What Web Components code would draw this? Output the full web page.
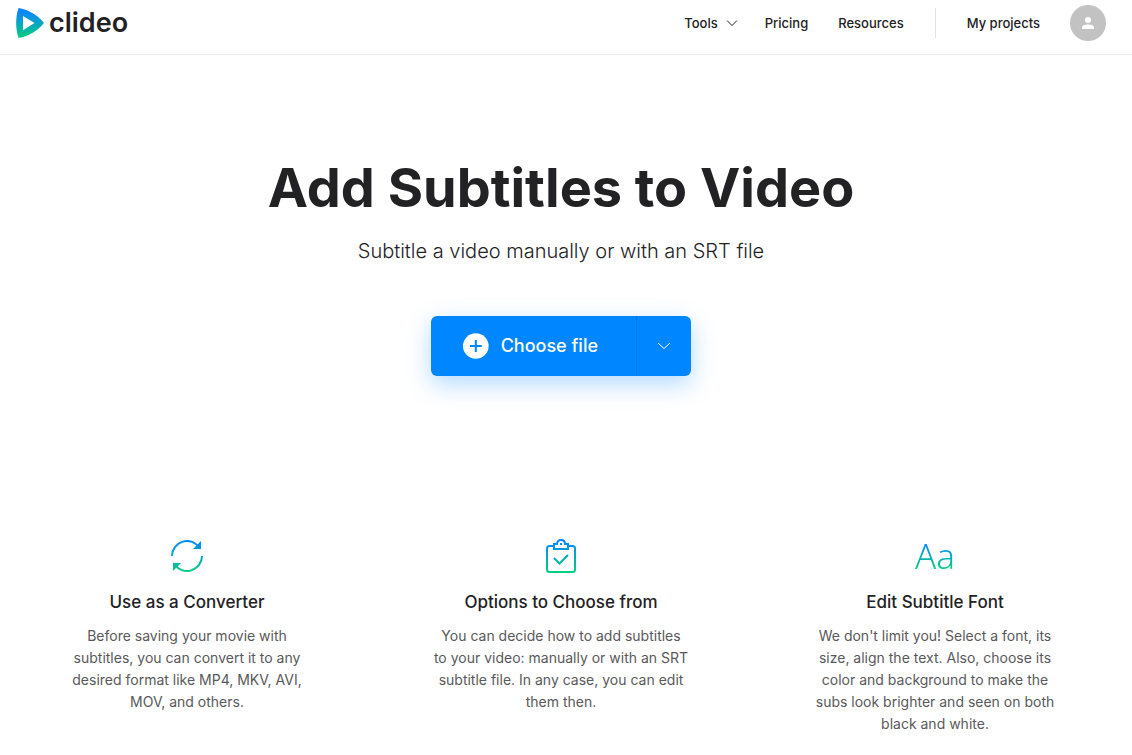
<!DOCTYPE html>
<html lang="en">
<head>
<meta charset="utf-8">
<meta name="viewport" content="width=device-width, initial-scale=1">
<title>Add Subtitles to Video - Clideo</title>
<style>
  body {
    margin: 0;
    background: #fff;
    color: #222224;
    font-family: Inter, "Liberation Sans", sans-serif;
  }
</style>
</head>
<body>
<clideo-page></clideo-page>

<script>
/**
 * Landing page components
 */

class ClideoLogo extends HTMLElement {
  constructor() {
    super();
    this.attachShadow({ mode: 'open' }).innerHTML = `
      <style>
        :host { display: block; }
        a {
          display: flex;
          align-items: center;
          gap: 5px;
          color: #222224;
          text-decoration: none;
          font: 600 27px/32px Inter, sans-serif;
        }
        svg { display: block; }
      </style>
      <a href="#">
        <svg width="28" height="32" viewBox="0 0 28 32" aria-hidden="true">
          <defs>
            <linearGradient id="g" x1="0" y1="0" x2="0" y2="1">
              <stop offset="0.1" stop-color="#0a85ff"/>
              <stop offset="1" stop-color="#05cd7c"/>
            </linearGradient>
          </defs>
          <path fill="url(#g)" fill-rule="evenodd" d="M2.500 1C12 2.600 21.300 7.500 28 16C21.300 24.500 12 29.400 2.500 31C-.600 21.500-.600 10.500 2.500 1ZM7 9V23.200L18.500 16Z"/>
        </svg>
        <span>clideo</span>
      </a>
    `;
  }
}

class ClideoHeader extends HTMLElement {
  constructor() {
    super();
    this.attachShadow({ mode: 'open' }).innerHTML = `
      <style>
        :host { display: block; }
        header {
          display: flex;
          align-items: center;
          justify-content: space-between;
          height: 46px;
          padding: 0 26px 8px 16px;
          border-bottom: 1px solid #ebebeb;
        }
        nav { display: flex; align-items: center; gap: 30px; }
        a, button {
          padding: 0;
          border: 0;
          background: none;
          color: inherit;
          font: 500 13px/20px Inter, sans-serif;
          text-decoration: none;
          cursor: pointer;
        }
        .tools { display: flex; align-items: center; gap: 8px; margin-right: -3px; }
        .line { width: 1px; height: 30px; margin: 0 1px; background: #e3e3e3; }
        .avatar {
          display: grid;
          place-items: center;
          width: 36px;
          height: 36px;
          border-radius: 50%;
          background: #c2c2c2;
        }
      </style>
      <header>
        <clideo-logo></clideo-logo>
        <nav>
          <button class="tools">Tools
            <svg width="12" height="8" viewBox="0 0 12 8" fill="none" stroke="#222224" aria-hidden="true"><path d="M1 1.500L6 6.500L11 1.500"/></svg>
          </button>
          <a href="#">Pricing</a>
          <a href="#">Resources</a>
          <span class="line"></span>
          <a href="#">My projects</a>
          <button class="avatar" aria-label="Account">
            <svg width="12" height="12" viewBox="0 0 12 12" fill="#fff" aria-hidden="true"><circle cx="6" cy="3" r="3"/><path d="M0 12V10.500C0 8.200 3 7.400 6 7.400S12 8.200 12 10.500V12Z"/></svg>
          </button>
        </nav>
      </header>
    `;
  }
}

class FilePicker extends HTMLElement {
  constructor() {
    super();
    this.attachShadow({ mode: 'open' }).innerHTML = `
      <style>
        :host {
          display: flex;
          height: 60px;
          border-radius: 6px;
          background: #0086ff;
          box-shadow: 0 8px 24px rgba(0, 134, 255, 0.3);
        }
        button {
          display: flex;
          align-items: center;
          justify-content: center;
          border: 0;
          background: none;
          color: #fff;
          font: 500 18px/24px Inter, sans-serif;
          cursor: pointer;
        }
        .choose { gap: 12px; width: 205px; padding: 0 38px 0 32px; justify-content: flex-start; white-space: nowrap; }
        .more { width: 55px; padding: 0; border-left: 1px solid #0077e2; }
      </style>
      <button class="choose">
        <svg width="26" height="26" viewBox="0 0 26 26" aria-hidden="true"><circle cx="13" cy="13" r="13" fill="#fff"/><path d="M13 7V19M7 13H19" stroke="#0086ff" stroke-width="2"/></svg>
        <slot></slot>
      </button>
      <button class="more" aria-label="More sources">
        <svg width="14" height="8" viewBox="0 0 14 8" fill="none" stroke="#fff" aria-hidden="true"><path d="M1 1L7 6.500L13 1"/></svg>
      </button>
    `;
  }
}

class FeatureCard extends HTMLElement {
  constructor() {
    super();
    this.attachShadow({ mode: 'open' }).innerHTML = `
      <style>
        :host { display: block; text-align: center; }
        .icon { display: flex; justify-content: center; height: 36px; }
        h2 { margin: 16px 0 11px; font: 500 17px/24px Inter, sans-serif; }
        p { max-width: 256px; margin: 0 auto; color: #59595b; font: 400 14px/22px Inter, sans-serif; }
      </style>
      <div class="icon"><slot name="icon"></slot></div>
      <h2><slot name="title"></slot></h2>
      <p><slot></slot></p>
    `;
  }
}

// Shared by the three feature icons, blue at the top and green at the bottom
const gradient = id => `
  <defs>
    <linearGradient id="${id}" gradientUnits="userSpaceOnUse" x1="0" y1="2" x2="0" y2="34">
      <stop offset="0" stop-color="#0086ff"/>
      <stop offset="1" stop-color="#00cf80"/>
    </linearGradient>
  </defs>`;

class ClideoPage extends HTMLElement {
  constructor() {
    super();
    this.attachShadow({ mode: 'open' }).innerHTML = `
      <style>
        :host { display: block; }
        main { padding-right: 10px; }
        .hero {
          display: flex;
          flex-direction: column;
          align-items: center;
          padding: 97px 20px 162px;
          text-align: center;
        }
        h1 { margin: 0; font: 700 54px/72px Inter, sans-serif; }
        .lead { margin: 12px 0 50px; font: 300 20px/30px Inter, sans-serif; }
        .features { display: grid; grid-template-columns: repeat(3, 1fr); }
        .aa {
          font: 400 35px/36px "Noto Sans", sans-serif;
          font-weight: 350;
          background: linear-gradient(#0086ff 15%, #00cf80 85%);
          -webkit-background-clip: text;
          background-clip: text;
          color: transparent;
        }
      </style>
      <clideo-header></clideo-header>
      <main>
        <section class="hero">
          <h1>Add Subtitles to Video</h1>
          <p class="lead">Subtitle a video manually or with an SRT file</p>
          <file-picker>Choose file</file-picker>
        </section>
        <section class="features">
          <feature-card>
            <svg slot="icon" width="36" height="36" viewBox="0 0 36 36" aria-hidden="true">
              ${gradient('sync')}
              <path fill="none" stroke="url(#sync)" stroke-width="2" d="M3 18A15 15 0 0 1 30.500 9.700M33 18A15 15 0 0 1 5.500 26.300"/>
              <path fill="url(#sync)" d="M32 3V11H24ZM4 33V25H12Z"/>
            </svg>
            <span slot="title">Use as a Converter</span>
            Before saving your movie with subtitles, you can convert it to any desired format like MP4, MKV, AVI, MOV, and others.
          </feature-card>
          <feature-card>
            <svg slot="icon" width="36" height="36" viewBox="0 0 36 36" aria-hidden="true">
              ${gradient('clip')}
              <g fill="none" stroke="url(#clip)" stroke-width="2">
                <path d="M11 8H6.500Q4 8 4 10.500V31.500Q4 34 6.500 34H29.500Q32 34 32 31.500V10.500Q32 8 29.500 8H25"/>
                <path d="M11 11V6H14C14 .700 22 .700 22 6H25V11ZM11 20L16.500 25.500L25 17"/>
              </g>
              <rect x="17" y="5" width="2" height="2" fill="url(#clip)"/>
            </svg>
            <span slot="title">Options to Choose from</span>
            You can decide how to add subtitles to your video: manually or with an SRT subtitle file. In any case, you can edit them then.
          </feature-card>
          <feature-card>
            <span slot="icon" class="aa">Aa</span>
            <span slot="title">Edit Subtitle Font</span>
            We don't limit you! Select a font, its size, align the text. Also, choose its color and background to make the subs look brighter and seen on both black and white.
          </feature-card>
        </section>
      </main>
    `;
  }
}

customElements.define('clideo-logo', ClideoLogo);
customElements.define('clideo-header', ClideoHeader);
customElements.define('file-picker', FilePicker);
customElements.define('feature-card', FeatureCard);
customElements.define('clideo-page', ClideoPage);
</script>
</body>
</html>
